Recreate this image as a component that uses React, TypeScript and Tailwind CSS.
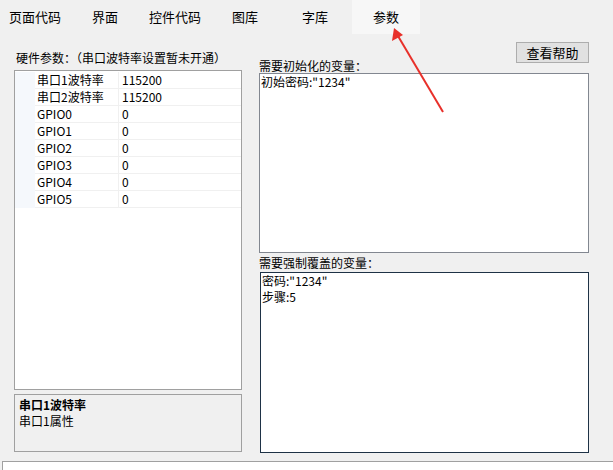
import React from "react";

const tabs = ["页面代码", "界面", "控件代码", "图库", "字库", "参数"];

const rows: [string, string][] = [
  ["串口1波特率", "115200"],
  ["串口2波特率", "115200"],
  ["GPIO0", "0"],
  ["GPIO1", "0"],
  ["GPIO2", "0"],
  ["GPIO3", "0"],
  ["GPIO4", "0"],
  ["GPIO5", "0"],
];

const font = { fontFamily: '"SimSun", "Noto Sans CJK SC", sans-serif' };

export default function App() {
  return (
    <div
      className="relative w-[613px] h-[470px] overflow-hidden bg-[#f0f0f0] text-[12px] leading-[12px] text-black flex flex-col"
      style={font}
    >
      {/* tab strip */}
      <div className="flex h-[34px] shrink-0">
        {tabs.map((t, i) => (
          <div
            key={t}
            className={`h-[34px] flex items-center justify-center text-[13px] ${
              i === 5 ? "bg-[#f7f7f7] ml-[2px] w-[68px]" : "w-[70px]"
            }`}
          >
            {t}
          </div>
        ))}
      </div>

      <div className="flex pl-[14px] flex-1">
        {/* left column */}
        <div className="w-[228px] flex flex-col pt-[16px]">
          <div className="h-[16px] flex items-center pl-[2px] whitespace-nowrap">硬件参数：（串口波特率设置暂未开通）</div>
          <div className="mt-[4px] h-[320px] border border-[#a0a0a0] bg-white pt-[1px]">
            {rows.map(([name, val]) => (
              <div key={name} className="flex h-[17px]">
                <div className="w-[20px] bg-[#f5f8fc]" />
                <div className="w-[84px] border-b border-r border-[#f0f0f0] flex items-center pl-[2px]">
                  {name}
                </div>
                <div className="flex-1 border-b border-[#f0f0f0] flex items-center pl-[3px]">{val}</div>
              </div>
            ))}
          </div>
          <div className="mt-[4px] h-[58px] border border-[#a0a0a0] px-[4px] pt-[2px] leading-[16px]">
            <div className="font-bold">串口1波特率</div>
            <div>串口1属性</div>
          </div>
        </div>

        {/* right column */}
        <div className="ml-[17px] w-[330px] flex flex-col pt-[8px]">
          <div className="flex justify-between items-start h-[31px]">
            <div className="h-[31px] pt-[16px] leading-[15px] whitespace-nowrap">需要初始化的变量：</div>
            <button className="w-[73px] h-[21px] bg-[#e1e1e1] border border-[#adadad] text-[13px] leading-[13px]">
              查看帮助
            </button>
          </div>
          <div className="h-[180px] border border-[#828790] bg-white px-[1px] pt-[1px] leading-[14px]">
            初始密码:"1234"
          </div>
          <div className="h-[19px] flex items-center whitespace-nowrap">需要强制覆盖的变量：</div>
          <div className="ml-[1px] h-[181px] border border-[#1e3246] bg-white px-[1px] leading-[16px]">
            <div>密码:"1234"</div>
            <div>步骤:5</div>
          </div>
        </div>
      </div>

      {/* bottom box */}
      <div className="ml-[2px] h-[9px] shrink-0 border-t border-l border-[#a0a0a0] bg-white" />

      {/* annotation arrow */}
      <svg className="absolute left-0 top-0 pointer-events-none" width="613" height="470">
        <line x1="443" y1="112" x2="398" y2="36" stroke="#e8302a" strokeWidth="2" />
        <polygon points="394,28 392,41 403,35" fill="#e8302a" />
      </svg>
    </div>
  );
}
